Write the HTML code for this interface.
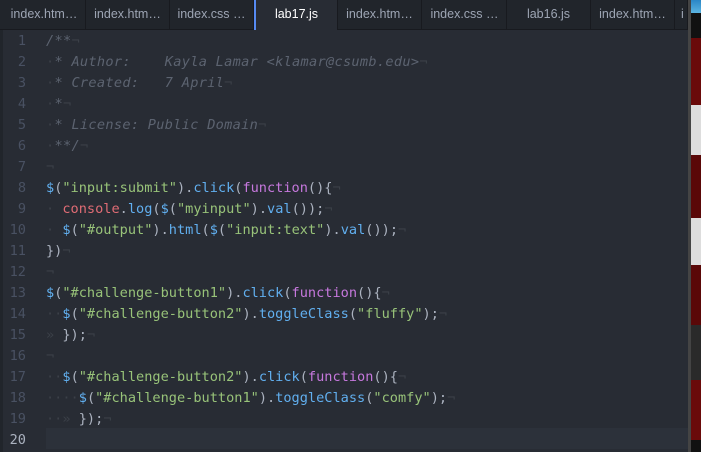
<!DOCTYPE html>
<html><head><meta charset="utf-8"><style>
*{margin:0;padding:0;box-sizing:border-box}
body{width:701px;height:452px;overflow:hidden;background:#282c34;position:relative;font-family:"DejaVu Sans Mono","Liberation Mono",monospace}
#tabs{position:absolute;left:0;top:0;width:688px;height:30px;background:#21252b;border-bottom:1px solid #181a1f}
.tab{position:absolute;top:0;height:29px;width:84px;border-right:1px solid #181a1f;color:#9da5b4;font:12.5px "Liberation Sans",sans-serif;line-height:29px;text-align:center;white-space:nowrap;overflow:hidden}
.tab.act{background:#282c34;color:#fff;height:30px;border-left:2px solid #568af2}
#edit{position:absolute;left:3px;top:30px;width:685px;height:422px;background:#282c34}
#leftbar{position:absolute;left:0;top:30px;width:3px;height:422px;background:#21252b}
.ln{position:absolute;left:0;width:26px;height:21px;line-height:21px;font-size:13.6px;color:#495162;text-align:right}
.cd{position:absolute;left:46px;height:21px;line-height:21px;font-size:13.6px;color:#abb2bf;white-space:pre}
.c{color:#5c6370;font-style:italic;letter-spacing:0.3px}.i{color:#3b4048;font-style:normal}
.s{color:#98c379}.b{color:#61afef}.p{color:#c678dd}.r{color:#e06c75}
#cur{position:absolute;left:46px;top:428px;width:642px;height:21px;background:#2c313a}
#strip{position:absolute;left:688px;top:0;width:13px;height:452px;background:#111}
</style></head><body>
<div id="tabs">
<div class="tab" style="left:3px;width:83px">index.htm…</div>
<div class="tab" style="left:86px">index.htm…</div>
<div class="tab" style="left:170px">index.css …</div>
<div class="tab act" style="left:254px">lab17.js</div>
<div class="tab" style="left:338px">index.htm…</div>
<div class="tab" style="left:423px">index.css …</div>
<div class="tab" style="left:507px">lab16.js</div>
<div class="tab" style="left:591px">index.htm…</div>
<div class="tab" style="left:675px;width:13px;text-align:left;padding-left:6px">i</div>
</div>
<div id="leftbar"></div>
<div id="edit"></div>
<div id="cur"></div>
<div id="strip">
<div style="position:absolute;left:3px;top:0;width:10px;height:13px;background:linear-gradient(#2a86c6,#5bb4e0)"></div>
<div style="position:absolute;left:0;top:0;width:3px;height:452px;background:#444"></div>
<div style="position:absolute;left:3px;top:38px;width:10px;height:67px;background:#6a0a0a"></div>
<div style="position:absolute;left:3px;top:105px;width:10px;height:50px;background:#ddd"></div>
<div style="position:absolute;left:3px;top:155px;width:10px;height:63px;background:#5a0808"></div>
<div style="position:absolute;left:3px;top:218px;width:10px;height:47px;background:#ddd"></div>
<div style="position:absolute;left:3px;top:265px;width:10px;height:60px;background:#5a0808"></div>
<div style="position:absolute;left:3px;top:325px;width:10px;height:55px;background:#2a2a2a"></div>
<div style="position:absolute;left:3px;top:380px;width:10px;height:60px;background:#6a0a0a"></div>
</div>

<div class="ln" style="top:31px">1</div><div class="cd c" style="top:31px">/**<span class="i">¬</span></div>
<div class="ln" style="top:52px">2</div><div class="cd c" style="top:52px"><span class="i">·</span>* Author:    Kayla Lamar &lt;klamar@csumb.edu&gt;<span class="i">¬</span></div>
<div class="ln" style="top:73px">3</div><div class="cd c" style="top:73px"><span class="i">·</span>* Created:   7 April<span class="i">¬</span></div>
<div class="ln" style="top:94px">4</div><div class="cd c" style="top:94px"><span class="i">·</span>*<span class="i">¬</span></div>
<div class="ln" style="top:115px">5</div><div class="cd c" style="top:115px"><span class="i">·</span>* License: Public Domain<span class="i">¬</span></div>
<div class="ln" style="top:136px">6</div><div class="cd c" style="top:136px"><span class="i">·</span>**/<span class="i">¬</span></div>
<div class="ln" style="top:157px">7</div><div class="cd" style="top:157px"><span class="i">¬</span></div>
<div class="ln" style="top:178px">8</div><div class="cd" style="top:178px"><span class="b">$</span>(<span class="s">"input:submit"</span>).<span class="b">click</span>(<span class="p">function</span>(){<span class="i">¬</span></div>
<div class="ln" style="top:199px">9</div><div class="cd" style="top:199px"><span class="i">· </span><span class="r">console</span>.<span class="b">log</span>(<span class="b">$</span>(<span class="s">"myinput"</span>).<span class="b">val</span>());<span class="i">¬</span></div>
<div class="ln" style="top:220px">10</div><div class="cd" style="top:220px"><span class="i">· </span><span class="b">$</span>(<span class="s">"#output"</span>).<span class="b">html</span>(<span class="b">$</span>(<span class="s">"input:text"</span>).<span class="b">val</span>());<span class="i">¬</span></div>
<div class="ln" style="top:241px">11</div><div class="cd" style="top:241px">})<span class="i">¬</span></div>
<div class="ln" style="top:262px">12</div><div class="cd" style="top:262px"><span class="i">¬</span></div>
<div class="ln" style="top:283px">13</div><div class="cd" style="top:283px"><span class="b">$</span>(<span class="s">"#challenge-button1"</span>).<span class="b">click</span>(<span class="p">function</span>(){<span class="i">¬</span></div>
<div class="ln" style="top:304px">14</div><div class="cd" style="top:304px"><span class="i">··</span><span class="b">$</span>(<span class="s">"#challenge-button2"</span>).<span class="b">toggleClass</span>(<span class="s">"fluffy"</span>);<span class="i">¬</span></div>
<div class="ln" style="top:325px">15</div><div class="cd" style="top:325px"><span class="i">» </span>});<span class="i">¬</span></div>
<div class="ln" style="top:346px">16</div><div class="cd" style="top:346px"><span class="i">¬</span></div>
<div class="ln" style="top:367px">17</div><div class="cd" style="top:367px"><span class="i">··</span><span class="b">$</span>(<span class="s">"#challenge-button2"</span>).<span class="b">click</span>(<span class="p">function</span>(){<span class="i">¬</span></div>
<div class="ln" style="top:388px">18</div><div class="cd" style="top:388px"><span class="i">····</span><span class="b">$</span>(<span class="s">"#challenge-button1"</span>).<span class="b">toggleClass</span>(<span class="s">"comfy"</span>);<span class="i">¬</span></div>
<div class="ln" style="top:409px">19</div><div class="cd" style="top:409px"><span class="i">··» </span>});<span class="i">¬</span></div>
<div class="ln" style="top:430px;color:#abb2bf">20</div>
</body></html>
